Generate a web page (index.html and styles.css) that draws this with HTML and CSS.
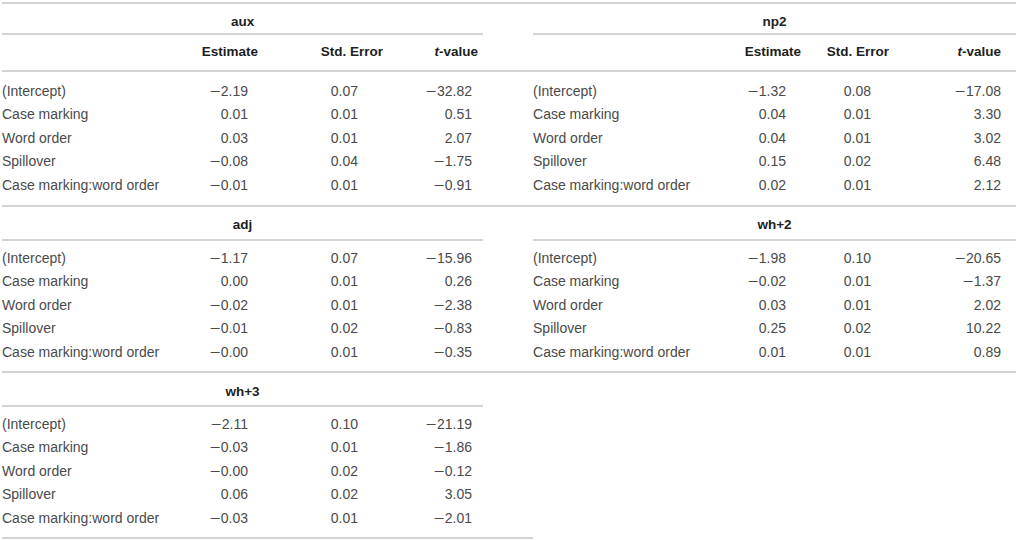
FILE: index.html
```html
<!DOCTYPE html>
<html lang="en">
<head>
<meta charset="utf-8">
<title>Model estimates</title>
<link rel="stylesheet" href="styles.css">
</head>
<body>
<table class="stats">
  <colgroup>
    <col class="w-l1"><col class="w-l2"><col class="w-l3"><col class="w-l4">
    <col class="w-gap">
    <col class="w-r1"><col class="w-r2"><col class="w-r3"><col class="w-r4">
  </colgroup>
  <tbody>
    <tr class="title t1">
      <th colspan="4" class="ttl ttl-l">aux</th><td class="gap"></td><th colspan="4" class="ttl ttl-r">np2</th>
    </tr>
    <tr class="head">
      <th class="lbl"></th><th class="h2">Estimate</th><th class="h3">Std. Error</th><th class="h4"><i>t</i>-value</th>
      <td class="gap"></td>
      <th class="lbl"></th><th class="h7">Estimate</th><th class="h8">Std. Error</th><th class="h9"><i>t</i>-value</th>
    </tr>
    <tr class="first f1">
      <td class="lbl">(Intercept)</td><td class="n2"><span class="m">−</span>2.19</td><td class="n3">0.07</td><td class="n4"><span class="m">−</span>32.82</td>
      <td class="gap"></td>
      <td class="lbl">(Intercept)</td><td class="n7"><span class="m">−</span>1.32</td><td class="n8">0.08</td><td class="n9"><span class="m">−</span>17.08</td>
    </tr>
    <tr>
      <td class="lbl">Case marking</td><td class="n2">0.01</td><td class="n3">0.01</td><td class="n4">0.51</td>
      <td class="gap"></td>
      <td class="lbl">Case marking</td><td class="n7">0.04</td><td class="n8">0.01</td><td class="n9">3.30</td>
    </tr>
    <tr>
      <td class="lbl">Word order</td><td class="n2">0.03</td><td class="n3">0.01</td><td class="n4">2.07</td>
      <td class="gap"></td>
      <td class="lbl">Word order</td><td class="n7">0.04</td><td class="n8">0.01</td><td class="n9">3.02</td>
    </tr>
    <tr>
      <td class="lbl">Spillover</td><td class="n2"><span class="m">−</span>0.08</td><td class="n3">0.04</td><td class="n4"><span class="m">−</span>1.75</td>
      <td class="gap"></td>
      <td class="lbl">Spillover</td><td class="n7">0.15</td><td class="n8">0.02</td><td class="n9">6.48</td>
    </tr>
    <tr class="last l1">
      <td class="lbl">Case marking:word order</td><td class="n2"><span class="m">−</span>0.01</td><td class="n3">0.01</td><td class="n4"><span class="m">−</span>0.91</td>
      <td class="gap"></td>
      <td class="lbl">Case marking:word order</td><td class="n7">0.02</td><td class="n8">0.01</td><td class="n9">2.12</td>
    </tr>

    <tr class="title t2">
      <th colspan="4" class="ttl ttl-l">adj</th><td class="gap"></td><th colspan="4" class="ttl ttl-r">wh+2</th>
    </tr>
    <tr class="first">
      <td class="lbl">(Intercept)</td><td class="n2"><span class="m">−</span>1.17</td><td class="n3">0.07</td><td class="n4"><span class="m">−</span>15.96</td>
      <td class="gap"></td>
      <td class="lbl">(Intercept)</td><td class="n7"><span class="m">−</span>1.98</td><td class="n8">0.10</td><td class="n9"><span class="m">−</span>20.65</td>
    </tr>
    <tr>
      <td class="lbl">Case marking</td><td class="n2">0.00</td><td class="n3">0.01</td><td class="n4">0.26</td>
      <td class="gap"></td>
      <td class="lbl">Case marking</td><td class="n7"><span class="m">−</span>0.02</td><td class="n8">0.01</td><td class="n9"><span class="m">−</span>1.37</td>
    </tr>
    <tr>
      <td class="lbl">Word order</td><td class="n2"><span class="m">−</span>0.02</td><td class="n3">0.01</td><td class="n4"><span class="m">−</span>2.38</td>
      <td class="gap"></td>
      <td class="lbl">Word order</td><td class="n7">0.03</td><td class="n8">0.01</td><td class="n9">2.02</td>
    </tr>
    <tr>
      <td class="lbl">Spillover</td><td class="n2"><span class="m">−</span>0.01</td><td class="n3">0.02</td><td class="n4"><span class="m">−</span>0.83</td>
      <td class="gap"></td>
      <td class="lbl">Spillover</td><td class="n7">0.25</td><td class="n8">0.02</td><td class="n9">10.22</td>
    </tr>
    <tr class="last">
      <td class="lbl">Case marking:word order</td><td class="n2"><span class="m">−</span>0.00</td><td class="n3">0.01</td><td class="n4"><span class="m">−</span>0.35</td>
      <td class="gap"></td>
      <td class="lbl">Case marking:word order</td><td class="n7">0.01</td><td class="n8">0.01</td><td class="n9">0.89</td>
    </tr>

    <tr class="title t3">
      <th colspan="4" class="ttl ttl-l">wh+3</th><td class="gap"></td><td colspan="4" class="empty"></td>
    </tr>
    <tr class="first">
      <td class="lbl">(Intercept)</td><td class="n2"><span class="m">−</span>2.11</td><td class="n3">0.10</td><td class="n4"><span class="m">−</span>21.19</td>
      <td class="gap"></td><td colspan="4" class="empty"></td>
    </tr>
    <tr>
      <td class="lbl">Case marking</td><td class="n2"><span class="m">−</span>0.03</td><td class="n3">0.01</td><td class="n4"><span class="m">−</span>1.86</td>
      <td class="gap"></td><td colspan="4" class="empty"></td>
    </tr>
    <tr>
      <td class="lbl">Word order</td><td class="n2"><span class="m">−</span>0.00</td><td class="n3">0.02</td><td class="n4"><span class="m">−</span>0.12</td>
      <td class="gap"></td><td colspan="4" class="empty"></td>
    </tr>
    <tr>
      <td class="lbl">Spillover</td><td class="n2">0.06</td><td class="n3">0.02</td><td class="n4">3.05</td>
      <td class="gap"></td><td colspan="4" class="empty"></td>
    </tr>
    <tr class="last final">
      <td class="lbl">Case marking:word order</td><td class="n2"><span class="m">−</span>0.03</td><td class="n3">0.01</td><td class="n4"><span class="m">−</span>2.01</td>
      <td class="gap"></td><td colspan="4" class="empty"></td>
    </tr>
  </tbody>
</table>
</body>
</html>
```

FILE: styles.css
```css
html, body {
  margin: 0;
  padding: 0;
  background: #ffffff;
}

body {
  font-family: "Liberation Sans", Arial, sans-serif;
  color: #4a4a4a;
  font-size: 14px;
}

.stats {
  margin: 2px 0 0 2px;
  width: 1014px;
  table-layout: fixed;
  border-collapse: separate;
  border-spacing: 0;
  border-top: 2px solid #d3d3d3;
}

.w-l1 { width: 178px; }
.w-l2 { width: 100px; }
.w-l3 { width: 134px; }
.w-l4 { width: 69px; }
.w-gap { width: 50px; }
.w-r1 { width: 187px; }
.w-r2 { width: 90px; }
.w-r3 { width: 83px; }
.w-r4 { width: 123px; }

.stats td,
.stats th {
  padding: 0;
  white-space: nowrap;
  vertical-align: top;
  box-sizing: border-box;
}

.stats td {
  line-height: 23.4px;
  font-weight: normal;
}

/* titles */
.title th,
.title td {
  line-height: 16px;
}

.ttl {
  font-size: 13.5px;
  font-weight: bold;
  color: #1e1e1e;
  text-align: center;
  border-bottom: 2px solid #d3d3d3;
}

.ttl-l { padding-left: 5px; }
.ttl-r { padding-right: 20px; }

.t1 th, .t1 td { padding-top: 10px; padding-bottom: 3px; }
.t2 th, .t2 td { padding-top: 10px; padding-bottom: 6px; }
.t3 th, .t3 td { padding-top: 11px; padding-bottom: 5px; }

/* column headers */
.head th,
.head td {
  font-size: 13.5px;
  font-weight: bold;
  color: #1e1e1e;
  line-height: 16px;
  padding-top: 9px;
  padding-bottom: 10px;
  text-align: right;
  border-bottom: 2px solid #d3d3d3;
}

.head .lbl { text-align: left; }

.head .h2 { padding-right: 22px; }
.head .h3 { padding-right: 31px; }
.head .h4 { padding-right: 5px; }
.head .h7 { padding-right: 9px; }
.head .h8 { padding-right: 4px; }
.head .h9 { padding-right: 15px; }

/* data cells */
.lbl { text-align: left; }

.n2, .n3, .n4, .n7, .n8, .n9 { text-align: right; }

.n2 { padding-right: 32px !important; }
.n3 { padding-right: 56px !important; }
.n4 { padding-right: 11px !important; }
.n7 { padding-right: 24px !important; }
.n8 { padding-right: 22px !important; }
.n9 { padding-right: 15px !important; }

.m {
  display: inline-block;
  margin-right: 1px;
  transform: scaleX(1.3);
  transform-origin: right center;
}

.first td { padding-top: 6px; }
.f1 td { padding-top: 8px; }

.last td {
  padding-bottom: 7px;
  border-bottom: 2px solid #d3d3d3;
}

.l1 td { padding-bottom: 8px; }

.final .empty { border-bottom: none; }
```
